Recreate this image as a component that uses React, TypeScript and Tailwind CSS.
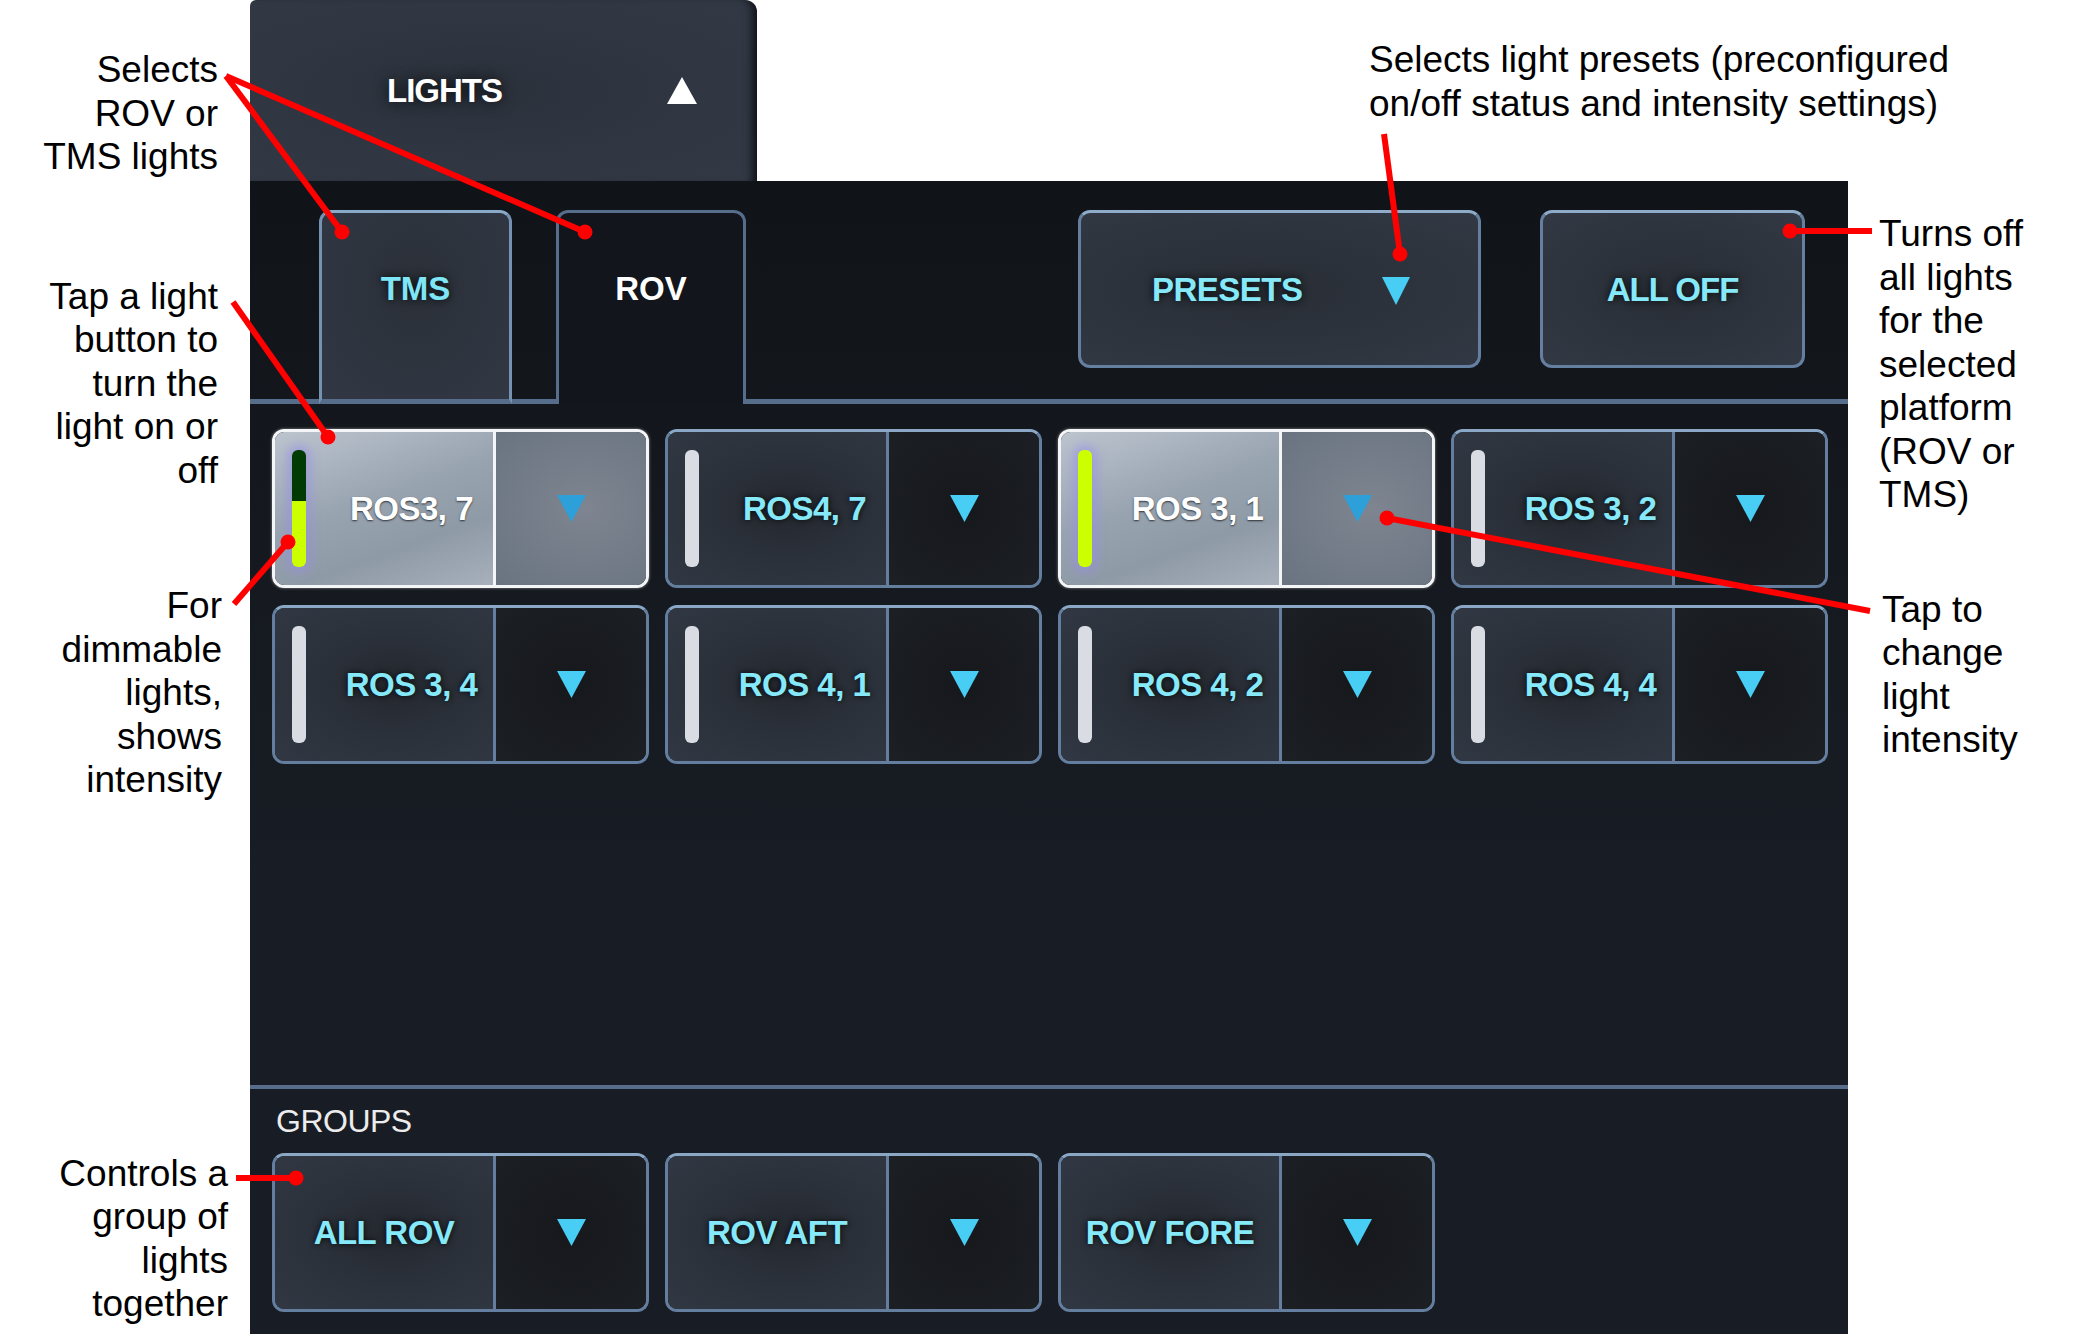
import React from "react";

const ann = "text-[37px] leading-[43.5px] text-black whitespace-nowrap";

function Tri({ color, w = 29, h = 27, up = false }: { color: string; w?: number; h?: number; up?: boolean }) {
  return (
    <svg width={w} height={h} viewBox={`0 0 ${w} ${h}`} className="block">
      {up ? (
        <polygon points={`${w / 2},0 ${w},${h} 0,${h}`} fill={color} />
      ) : (
        <polygon points={`0,0 ${w},0 ${w / 2},${h}`} fill={color} />
      )}
    </svg>
  );
}

type LB = { label: string; bar?: "off" | "half" | "full" | null; active?: boolean };

function LightButton({ label, bar = null, active = false }: LB) {
  const outer = active
    ? "border-[#f4f5f7] shadow-[0_0_3px_rgba(255,255,255,0.5)]"
    : "border-[#637e9e] border-t-[#8aa8c6]";
  return (
    <div className={`w-[377px] h-[159px] shrink-0 rounded-[12px] border-[3px] flex overflow-hidden ${outer}`}>
      <div
        className={`w-[218px] h-full flex items-center ${
          active
            ? "bg-[linear-gradient(160deg,#bcc4ce_0%,#98a3b0_45%,#8f9aa7_70%,#a7b0bb_100%)]"
            : "bg-[radial-gradient(ellipse_at_55%_50%,#24282f_0%,#2c323c_55%,#313843_100%)]"
        }`}
      >
        {bar && (
          <div
            className={`ml-[17px] w-[14px] h-[117px] rounded-[6px] overflow-hidden flex flex-col shrink-0 ${
              active ? "shadow-[0_0_10px_5px_rgba(150,140,235,0.55)]" : ""
            }`}
          >
            {bar === "off" && <div className="flex-1 bg-[#d9dde3]" />}
            {bar === "half" && (
              <>
                <div className="h-[51px] bg-[#013a03]" />
                <div className="flex-1 bg-[#ccff00]" />
              </>
            )}
            {bar === "full" && <div className="flex-1 bg-[#ccff00]" />}
          </div>
        )}
        <div
          className={`flex-1 text-center font-bold text-[33px] leading-none tracking-[-0.5px] whitespace-nowrap ${
            bar ? "pl-[24px]" : ""
          } ${
            active
              ? "text-white [text-shadow:0_1px_2px_rgba(0,0,0,0.7)]"
              : "text-[#86e9f9] [text-shadow:0_0_6px_rgba(0,0,0,0.9)]"
          }`}
        >
          {label}
        </div>
      </div>
      <div className={`w-[3px] h-full ${active ? "bg-[#f4f5f7]" : "bg-[#637e9e]"}`} />
      <div
        className={`flex-1 h-full flex items-center justify-center ${
          active
            ? "bg-[radial-gradient(ellipse_at_60%_50%,#7e8590_0%,#737c88_50%,#6a7480_100%)]"
            : "bg-[radial-gradient(ellipse_at_50%_50%,#16181c_0%,#1c1f24_100%)]"
        }`}
      >
        <Tri color={active ? "#2d9fd9" : "#48cdf4"} />
      </div>
    </div>
  );
}

function Arrows() {
  const red = "#ff0000";
  const lines: [number, number, number, number][] = [
    [226, 76, 342, 232],
    [226, 76, 585, 232],
    [233, 302, 328, 437],
    [234, 604, 288, 542],
    [236, 1178, 296, 1178],
    [1384, 134, 1400, 254],
    [1872, 231, 1790, 231],
    [1870, 611, 1387, 518],
  ];
  return (
    <svg
      className="absolute left-0 top-0 pointer-events-none"
      width={2100}
      height={1334}
      viewBox="0 0 2100 1334"
    >
      {lines.map(([x1, y1, x2, y2], i) => (
        <g key={i}>
          <line x1={x1} y1={y1} x2={x2} y2={y2} stroke={red} strokeWidth={6} />
          <circle cx={x2} cy={y2} r={7.5} fill={red} />
        </g>
      ))}
    </svg>
  );
}

export default function App() {
  const row1: LB[] = [
    { label: "ROS3, 7", bar: "half", active: true },
    { label: "ROS4, 7", bar: "off" },
    { label: "ROS 3, 1", bar: "full", active: true },
    { label: "ROS 3, 2", bar: "off" },
  ];
  const row2: LB[] = [
    { label: "ROS 3, 4", bar: "off" },
    { label: "ROS 4, 1", bar: "off" },
    { label: "ROS 4, 2", bar: "off" },
    { label: "ROS 4, 4", bar: "off" },
  ];
  const groups: LB[] = [{ label: "ALL ROV" }, { label: "ROV AFT" }, { label: "ROV FORE" }];
  const lineCol = "border-[#566e8c]";

  return (
    <div className="relative w-[2100px] h-[1334px] bg-white overflow-hidden font-['Liberation_Sans',Arial,sans-serif] flex">
      {/* Left annotations */}
      <div className="w-[250px] shrink-0 flex flex-col items-end">
        <div className={`${ann} mt-[48px] mr-[32px] text-right`}>
          Selects<br />ROV or<br />TMS lights
        </div>
        <div className={`${ann} mt-[96px] mr-[32px] text-right`}>
          Tap a light<br />button to<br />turn the<br />light on or<br />off
        </div>
        <div className={`${ann} mt-[92px] mr-[28px] text-right`}>
          For<br />dimmable<br />lights,<br />shows<br />intensity
        </div>
        <div className={`${ann} mt-[350px] mr-[22px] text-right`}>
          Controls a<br />group of<br />lights<br />together
        </div>
      </div>

      {/* Middle: UI */}
      <div className="w-[1598px] shrink-0 flex flex-col">
        <div className="h-[181px] flex shrink-0">
          <div className="w-[507px] shrink-0 h-full rounded-tl-[6px] rounded-tr-[12px] bg-[radial-gradient(ellipse_at_45%_50%,#2b313b_0%,#303743_60%,#323945_100%)] shadow-[inset_-10px_0_10px_-6px_rgba(0,0,0,0.75)] flex items-center">
            <span className="ml-[137px] text-white font-bold text-[33px] leading-none tracking-[-1px] [text-shadow:0_0_14px_rgba(0,0,0,0.9)]">
              LIGHTS
            </span>
            <span className="ml-auto mr-[60px]">
              <Tri color="#ffffff" w={30} h={27} up />
            </span>
          </div>
          <div className={`${ann} shrink-0 ml-[612px] mt-[38px]`}>
            Selects light presets (preconfigured
            <br />
            on/off status and intensity settings)
          </div>
        </div>

        <div className="flex-1 flex flex-col bg-[linear-gradient(180deg,#101317_0%,#14181e_25%,#181c24_60%,#181c24_100%)]">
          {/* Tab row */}
          <div className="mt-[29px] h-[194px] flex">
            <div className={`w-[69px] border-b-[5px] ${lineCol}`} />
            <div className={`w-[193px] rounded-t-[12px] border-[3px] border-b-[5px] ${lineCol} border-t-[#89a9c8] border-l-[#7592b2] border-r-[#7592b2] bg-[radial-gradient(ellipse_at_50%_40%,#2a2f37_0%,#2f3540_60%,#313843_100%)] flex justify-center`}>
              <span className="mt-[59px] h-[33px] text-[33px] leading-none font-bold text-[#7fe6f8] [text-shadow:0_0_8px_rgba(0,0,0,0.9)]">
                TMS
              </span>
            </div>
            <div className={`w-[44px] border-b-[5px] ${lineCol}`} />
            <div className="w-[190px] rounded-t-[12px] border-[3px] border-b-0 border-[#566e8c] bg-[#12151b] flex justify-center">
              <span className="mt-[59px] h-[33px] text-[33px] leading-none font-bold text-white">ROV</span>
            </div>
            <div className={`flex-1 border-b-[5px] ${lineCol} flex items-start`}>
              <div className="ml-[332px] w-[403px] h-[158px] rounded-[12px] border-[3px] border-[#647f9f] border-t-[#8eacca] bg-[radial-gradient(ellipse_at_45%_50%,#282d35_0%,#2e343e_60%,#323944_100%)] flex items-center">
                <span className="ml-[71px] text-[33px] leading-none font-bold tracking-[-0.5px] text-[#86e9f9] [text-shadow:0_0_8px_rgba(0,0,0,0.9)]">
                  PRESETS
                </span>
                <span className="ml-[79px] mt-[4px]">
                  <Tri color="#48cdf4" w={28} h={28} />
                </span>
              </div>
              <div className="ml-[59px] w-[265px] h-[158px] rounded-[12px] border-[3px] border-[#647f9f] border-t-[#8eacca] bg-[radial-gradient(ellipse_at_50%_50%,#282d35_0%,#2e343e_60%,#323944_100%)] flex items-center justify-center">
                <span className="text-[33px] leading-none font-bold tracking-[-1px] text-[#86e9f9] [text-shadow:0_0_8px_rgba(0,0,0,0.9)]">
                  ALL OFF
                </span>
              </div>
            </div>
          </div>

          {/* Light grid */}
          <div className="mt-[25px] ml-[22px] flex flex-col gap-[17px]">
            <div className="flex gap-[16px]">
              {row1.map((b) => (
                <LightButton key={b.label} {...b} />
              ))}
            </div>
            <div className="flex gap-[16px]">
              {row2.map((b) => (
                <LightButton key={b.label} {...b} />
              ))}
            </div>
          </div>

          <div className="flex-1" />

          {/* Groups */}
          <div className="h-[4px] bg-[#566e8c]" />
          <div className="h-[64px] flex items-center pl-[26px]">
            <span className="text-[32px] leading-none text-[#ececec] tracking-[-0.5px]">GROUPS</span>
          </div>
          <div className="ml-[22px] flex gap-[16px]">
            {groups.map((b) => (
              <LightButton key={b.label} {...b} />
            ))}
          </div>
          <div className="h-[22px]" />
        </div>
      </div>

      {/* Right annotations */}
      <div className="w-[252px] shrink-0 flex flex-col pl-[31px]">
        <div className={`${ann} mt-[212px]`}>
          Turns off<br />all lights<br />for the<br />selected<br />platform<br />(ROV or<br />TMS)
        </div>
        <div className={`${ann} mt-[71px] ml-[3px]`}>
          Tap to<br />change<br />light<br />intensity
        </div>
      </div>

      <Arrows />
    </div>
  );
}
